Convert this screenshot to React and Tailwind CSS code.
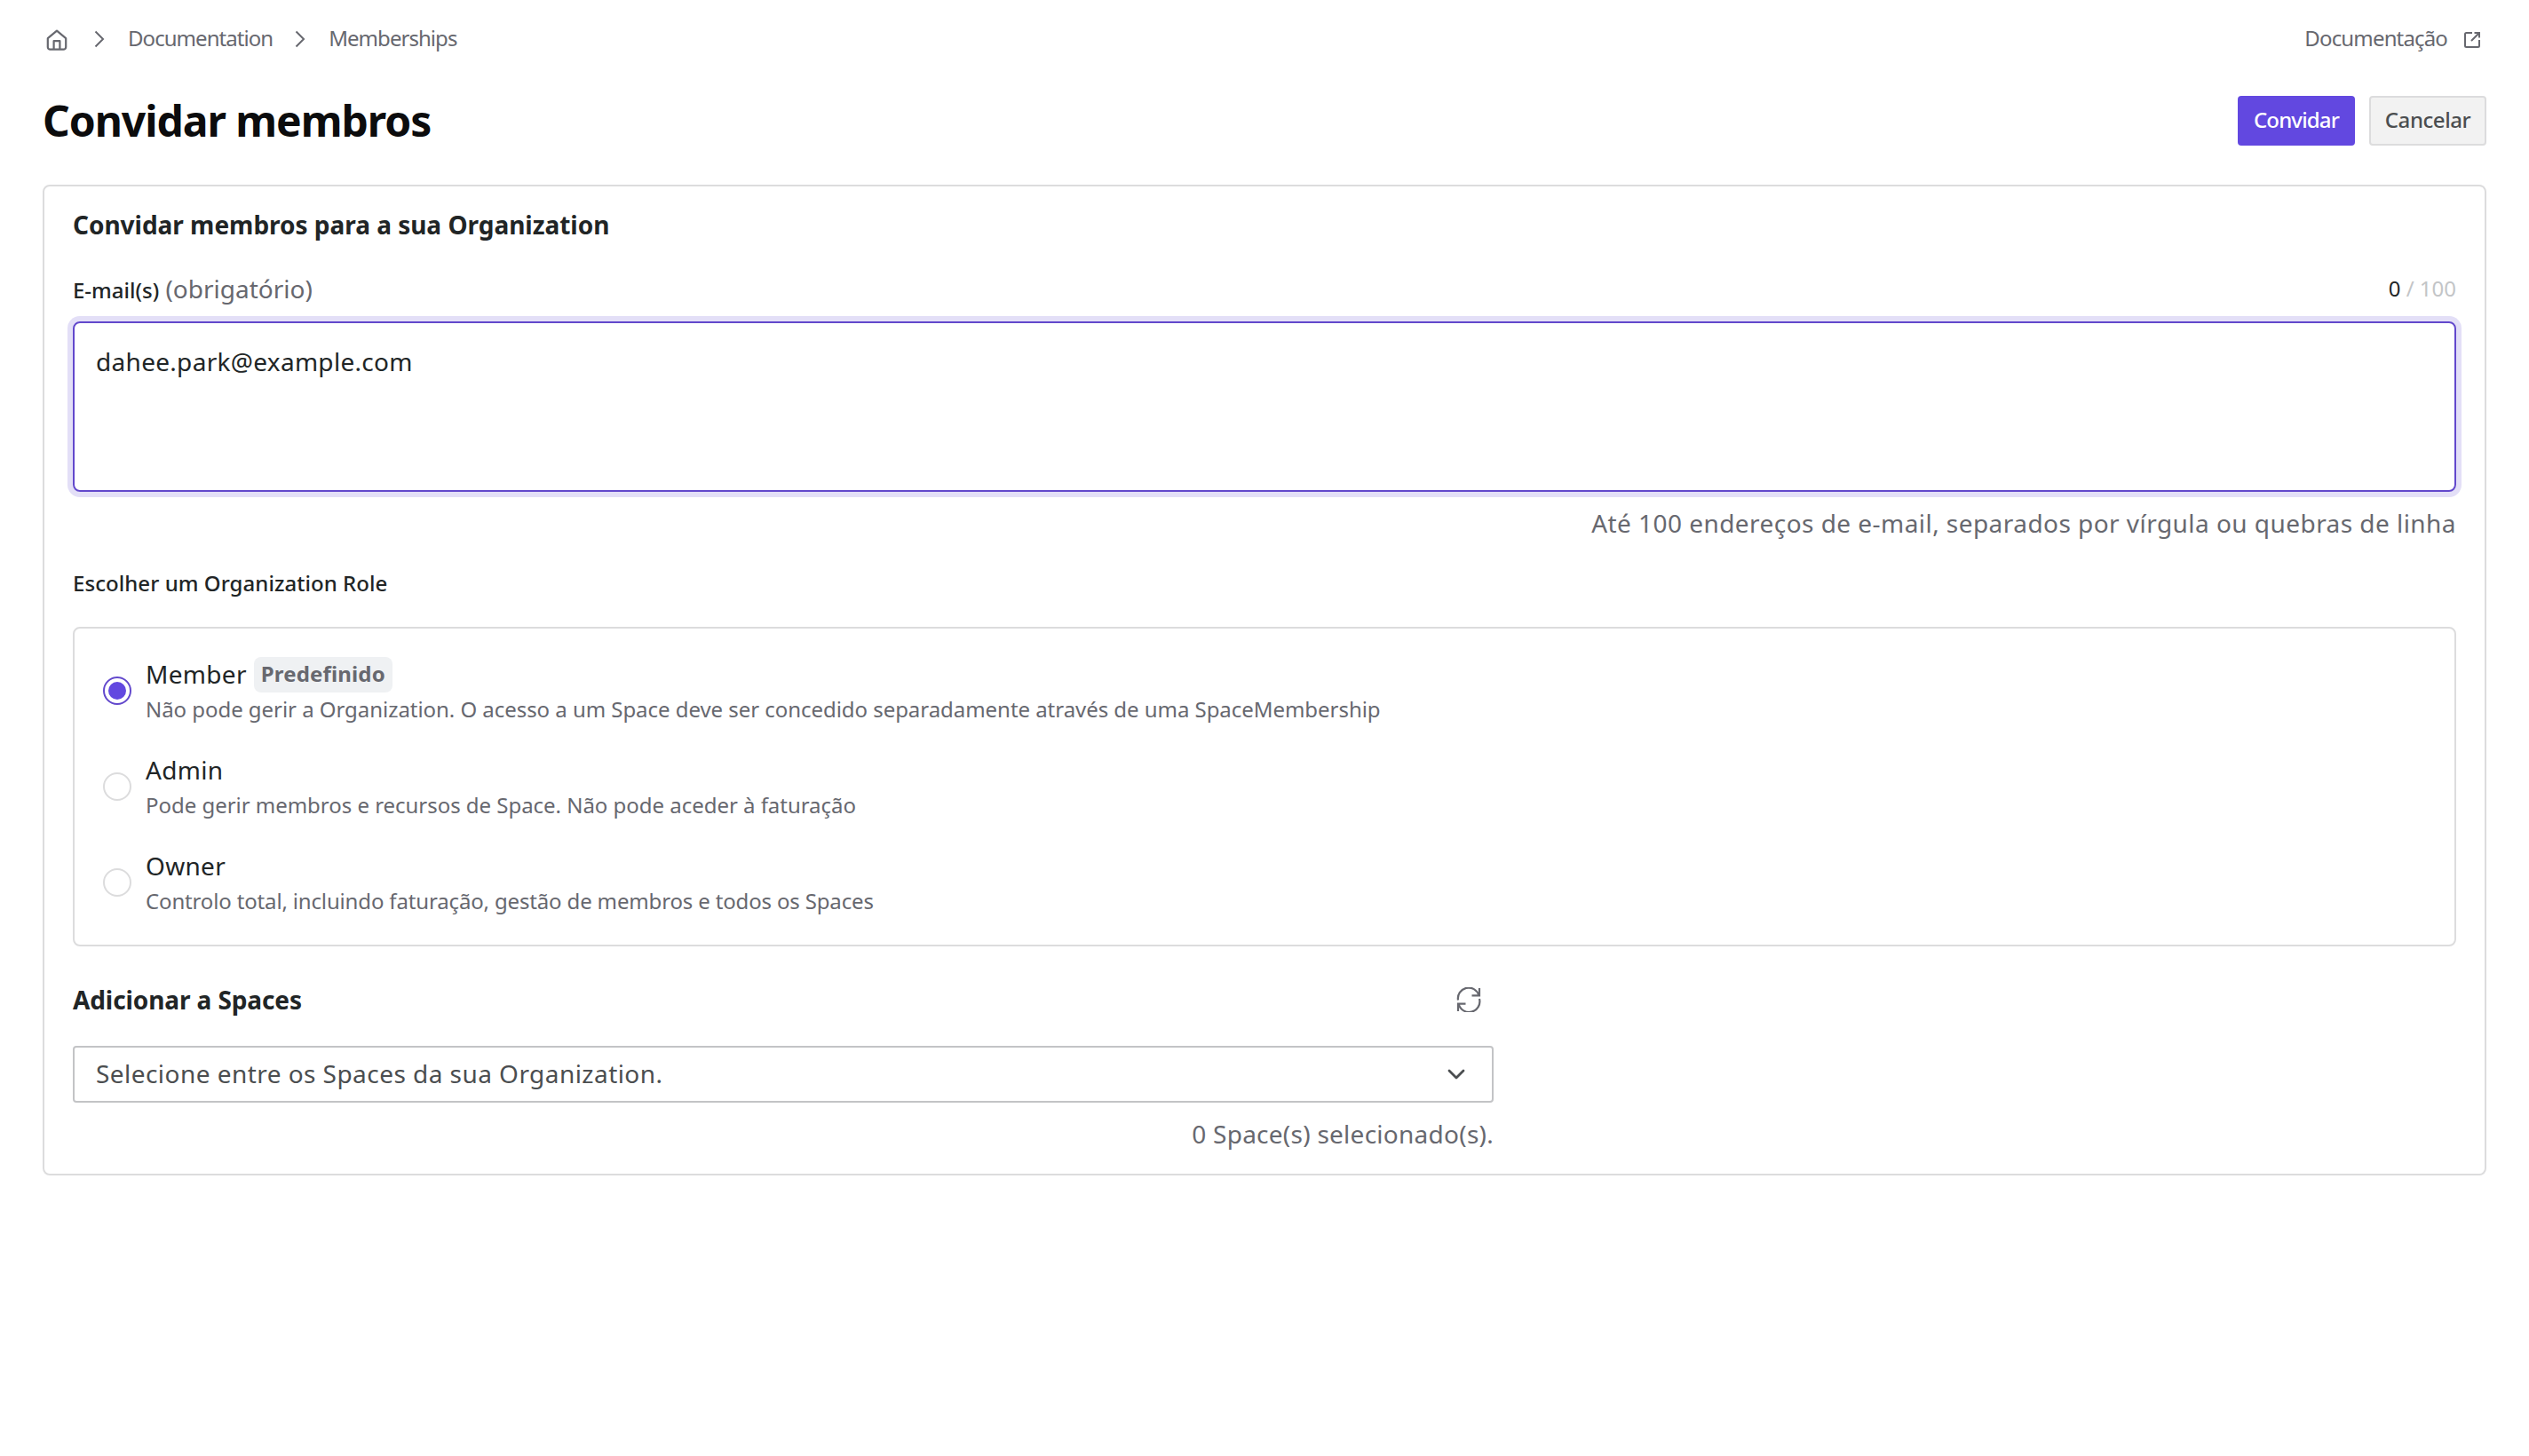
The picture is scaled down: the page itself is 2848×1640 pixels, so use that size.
import { useState } from 'react'

const roles = [
  {
    id: 'member',
    name: 'Member',
    badge: 'Predefinido',
    description:
      'Não pode gerir a Organization. O acesso a um Space deve ser concedido separadamente através de uma SpaceMembership',
    tracking: 'tracking-[-0.045px]',
  },
  {
    id: 'admin',
    name: 'Admin',
    description: 'Pode gerir membros e recursos de Space. Não pode aceder à faturação',
    tracking: 'tracking-[-0.03px]',
  },
  {
    id: 'owner',
    name: 'Owner',
    description: 'Controlo total, incluindo faturação, gestão de membros e todos os Spaces',
    tracking: 'tracking-[-0.155px]',
  },
]

function HomeIcon() {
  return (
    <svg className="w-6 h-6" viewBox="0 0 24 24" fill="none" stroke="currentColor" strokeWidth="2.2" strokeLinejoin="round">
      <path d="M1.8 10.2 12 1.6l10.2 8.6V20a2.7 2.7 0 0 1-2.7 2.7h-15A2.7 2.7 0 0 1 1.8 20Z" />
      <path d="M8.600 22.700v-9.500h6.800v9.500" />
    </svg>
  )
}

function CrumbChevron() {
  return (
    <svg className="w-3 h-5" viewBox="0 0 12 20" fill="none" stroke="currentColor" strokeWidth="2">
      <path d="m1.500 1.500 8.500 8.500-8.500 8.500" />
    </svg>
  )
}

function ExternalIcon() {
  return (
    <svg className="w-5 h-5" viewBox="0 0 20 20" fill="none" stroke="currentColor" strokeWidth="2">
      <path d="M10 2H3.500A1.500 1.500 0 0 0 2 3.500v13A1.500 1.500 0 0 0 3.500 18h13a1.500 1.500 0 0 0 1.500-1.500V10" />
      <path d="M12.500 2H18v5.500M18 2l-9 9" />
    </svg>
  )
}

function RefreshIcon() {
  return (
    <svg className="w-7 h-7" viewBox="0 0 28 28" fill="none" stroke="currentColor" strokeWidth="2.2">
      <path d="M2 14.500A12 12 0 0 1 25.300 9M26 13A12 12 0 0 1 2.700 19" />
      <path d="M26 1v8.300h-8.500M2 27v-8.300h8.500" />
    </svg>
  )
}

function ChevronDown() {
  return (
    <svg className="w-5 h-3" viewBox="0 0 20 12" fill="none" stroke="currentColor" strokeWidth="2.8" strokeLinecap="round" strokeLinejoin="round">
      <path d="m2 2 8 8 8-8" />
    </svg>
  )
}

export default function App() {
  const [emails, setEmails] = useState('dahee.park@example.com')
  const [role, setRole] = useState('member')

  return (
    <div className="min-h-screen bg-white px-12 font-['Noto_Sans',sans-serif] text-[28px] leading-10 text-[#212526]">
      {/* Breadcrumbs */}
      <nav className="flex items-center justify-between h-[86px] text-2xl text-[#67686f]">
        <div className="flex items-center tracking-[-0.95px]">
          <span className="ml-1 mt-1"><HomeIcon /></span>
          <span className="ml-[30px] mr-[26px] mt-0.5"><CrumbChevron /></span>
          <a>Documentation</a>
          <span className="ml-[25px] mr-[26px] mt-0.5"><CrumbChevron /></span>
          <a>Memberships</a>
        </div>
        <a className="flex items-center gap-[18px] pr-[6px] tracking-[-0.85px]">
          Documentação
          <span className="mt-1"><ExternalIcon /></span>
        </a>
      </nav>

      {/* Title and actions */}
      <header className="flex items-center justify-between mt-[22px] h-14">
        <h1 className="text-5xl font-bold tracking-[-1.05px] text-[#0c0c0d]">Convidar membros</h1>
        <div className="flex gap-4 text-2xl font-medium">
          <button className="w-[132px] h-14 rounded-[4px] bg-[#6248e0] pb-0.5 tracking-[-0.85px] text-white">Convidar</button>
          <button className="w-[132px] h-14 rounded-[4px] border-2 border-[#dcdcdd] bg-[#f2f2f2] pb-0.5 tracking-[-0.45px] text-[#4b4e50]">Cancelar</button>
        </div>
      </header>

      <main className="mt-11 border-2 border-[#dcdcdd] rounded-lg px-8 pt-[23px] pb-[25px]">
        <h2 className="font-bold tracking-[-0.02px]">Convidar membros para a sua Organization</h2>

        <div className="flex items-center justify-between mt-8 h-10">
          <label htmlFor="emails">
            <span className="text-2xl font-medium">E-mail(s)</span>{' '}
            <span className="text-[#67686f]">(obrigatório)</span>
          </label>
          <span className="text-2xl text-[#c3c5c7]">
            <span className="text-[#212526]">0</span> / 100
          </span>
        </div>
        <textarea
          id="emails"
          value={emails}
          onChange={e => setEmails(e.target.value)}
          className="block mt-[17px] w-full h-[192px] resize-none rounded-lg border-2 border-[#6248cc] px-6 py-[23px] tracking-[0.3px] outline-none ring-6 ring-[#e3dff7]"
        />
        <p className="mt-[15px] text-right tracking-[0.45px] text-[#67686f]">
          Até 100 endereços de e-mail, separados por vírgula ou quebras de linha
        </p>

        <h3 className="mt-7 text-2xl leading-10 font-medium tracking-[0.05px]">Escolher um Organization Role</h3>
        <div className="flex flex-col gap-7 mt-[29px] h-[360px] rounded-lg border-2 border-[#dcdcdd] px-8 pt-[31px]">
          {roles.map(r => (
            <label key={r.id} className="flex gap-4">
              <input
                type="radio"
                name="role"
                className="sr-only"
                checked={role === r.id}
                onChange={() => setRole(r.id)}
              />
              {role === r.id ? (
                <span className="mt-[23px] grid place-items-center w-8 h-8 rounded-full border-2 border-[#6248cc]">
                  <span className="w-5 h-5 rounded-full bg-[#6248e0]" />
                </span>
              ) : (
                <span className="mt-[23px] w-8 h-8 rounded-full border-2 border-[#dcdcdd]" />
              )}
              <span className="flex flex-col">
                <span className="flex items-center gap-2 h-10 tracking-[0.3px]">
                  {r.name}
                  {r.badge && (
                    <span className="h-10 rounded-lg bg-[#eff1f3] px-2 mt-0.5 text-2xl leading-[38px] font-bold tracking-[0.15px] text-[#67686f]">
                      {r.badge}
                    </span>
                  )}
                </span>
                <span className={`text-2xl leading-10 text-[#67686f] ${r.tracking}`}>{r.description}</span>
              </span>
            </label>
          ))}
        </div>

        <div className="w-[1600px]">
          <div className="flex items-center justify-between mt-10 h-10 pr-[14px]">
            <h3 className="font-bold tracking-[-0.1px]">Adicionar a Spaces</h3>
            <button className="text-[#67686f]"><RefreshIcon /></button>
          </div>
          <button className="flex items-center justify-between mt-8 w-full h-16 rounded-[4px] border-2 border-[#c3c4c6] pl-6 pr-[30px] tracking-[0.45px] text-[#4b4e50]">
            <span className="-mt-0.5">Selecione entre os Spaces da sua Organization.</span>
            <ChevronDown />
          </button>
          <p className="mt-[15px] text-right tracking-[0.26px] text-[#67686f]">0 Space(s) selecionado(s).</p>
        </div>
      </main>
    </div>
  )
}
